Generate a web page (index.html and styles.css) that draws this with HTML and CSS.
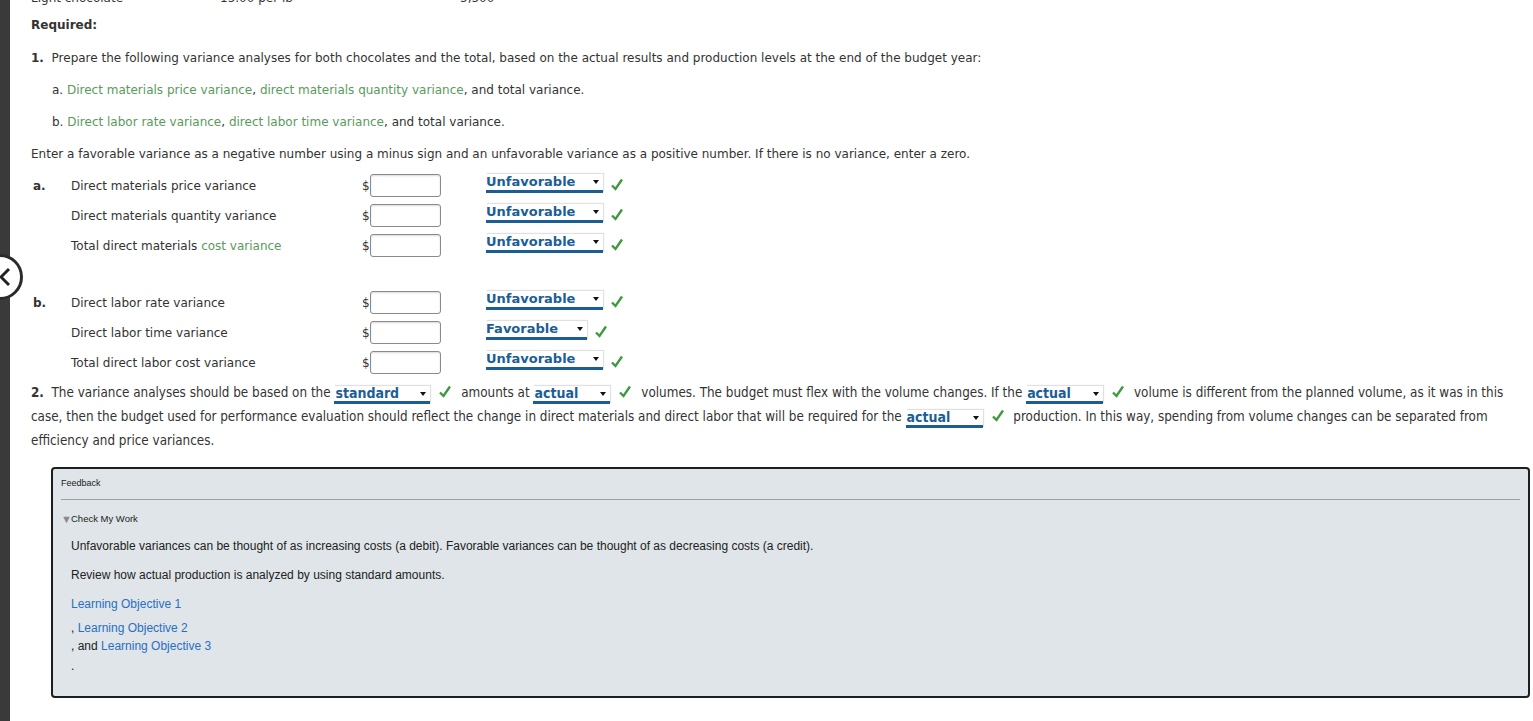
FILE: index.html
```html
<!DOCTYPE html>
<html>
<head>
<meta charset="utf-8">
<link rel="stylesheet" href="styles.css">
</head>
<body>
<div class="page">
  <div class="leftbar"></div>
  <button class="back-btn" aria-label="Back">
    <svg width="14" height="20" viewBox="0 0 14 20"><polyline points="11,2 3,10 11,18" fill="none" stroke="#222" stroke-width="3"/></svg>
  </button>
  <main class="content">
    <div class="top-line"><span class="tl1">Light chocolate</span><span class="tl2">15.00 per lb</span><span class="tl3">5,500</span></div>
    <div class="required">Required:</div>
    <div class="q1"><b>1.</b>&nbsp; Prepare the following variance analyses for both chocolates and the total, based on the actual results and production levels at the end of the budget year:</div>
    <div class="sub">a. <span class="term">Direct materials price variance</span>, <span class="term">direct materials quantity variance</span>, and total variance.</div>
    <div class="sub">b. <span class="term">Direct labor rate variance</span>, <span class="term">direct labor time variance</span>, and total variance.</div>
    <div class="enter">Enter a favorable variance as a negative number using a minus sign and an unfavorable variance as a positive number. If there is no variance, enter a zero.</div>

    <div class="vtable">
      <div class="vrow">
        <span class="letter">a.</span>
        <span class="vlabel">Direct materials price variance</span>
        <span class="dollar">$</span><span class="inp"></span>
        <span class="sel w-unf">Unfavorable<i class="arr"></i></span>
        <svg class="chk" viewBox="0 0 12 13"><path d="M1 7.5 L4.5 11 L11 1.5" fill="none" stroke="#3d9b3d" stroke-width="2.4"/></svg>
      </div>
      <div class="vrow">
        <span class="letter"></span>
        <span class="vlabel">Direct materials quantity variance</span>
        <span class="dollar">$</span><span class="inp"></span>
        <span class="sel w-unf">Unfavorable<i class="arr"></i></span>
        <svg class="chk" viewBox="0 0 12 13"><path d="M1 7.5 L4.5 11 L11 1.5" fill="none" stroke="#3d9b3d" stroke-width="2.4"/></svg>
      </div>
      <div class="vrow">
        <span class="letter"></span>
        <span class="vlabel">Total direct materials <span class="term">cost variance</span></span>
        <span class="dollar">$</span><span class="inp"></span>
        <span class="sel w-unf">Unfavorable<i class="arr"></i></span>
        <svg class="chk" viewBox="0 0 12 13"><path d="M1 7.5 L4.5 11 L11 1.5" fill="none" stroke="#3d9b3d" stroke-width="2.4"/></svg>
      </div>
    </div>

    <div class="vtable b">
      <div class="vrow">
        <span class="letter">b.</span>
        <span class="vlabel">Direct labor rate variance</span>
        <span class="dollar">$</span><span class="inp"></span>
        <span class="sel w-unf">Unfavorable<i class="arr"></i></span>
        <svg class="chk" viewBox="0 0 12 13"><path d="M1 7.5 L4.5 11 L11 1.5" fill="none" stroke="#3d9b3d" stroke-width="2.4"/></svg>
      </div>
      <div class="vrow">
        <span class="letter"></span>
        <span class="vlabel">Direct labor time variance</span>
        <span class="dollar">$</span><span class="inp"></span>
        <span class="sel w-fav">Favorable<i class="arr"></i></span>
        <svg class="chk" viewBox="0 0 12 13"><path d="M1 7.5 L4.5 11 L11 1.5" fill="none" stroke="#3d9b3d" stroke-width="2.4"/></svg>
      </div>
      <div class="vrow">
        <span class="letter"></span>
        <span class="vlabel">Total direct labor cost variance</span>
        <span class="dollar">$</span><span class="inp"></span>
        <span class="sel w-unf">Unfavorable<i class="arr"></i></span>
        <svg class="chk" viewBox="0 0 12 13"><path d="M1 7.5 L4.5 11 L11 1.5" fill="none" stroke="#3d9b3d" stroke-width="2.4"/></svg>
      </div>
    </div>

    <div class="q2"><b>2.</b>&nbsp; The variance analyses should be based on the <span class="isel w-std">standard<i class="arr"></i></span><svg class="ichk" viewBox="0 0 12 13"><path d="M1 7.5 L4.5 11 L11 1.5" fill="none" stroke="#3d9b3d" stroke-width="2.4"/></svg> amounts at <span class="isel w-act">actual<i class="arr"></i></span><svg class="ichk" viewBox="0 0 12 13"><path d="M1 7.5 L4.5 11 L11 1.5" fill="none" stroke="#3d9b3d" stroke-width="2.4"/></svg> volumes. The budget must flex with the volume changes. If the <span class="isel w-act">actual<i class="arr"></i></span><svg class="ichk" viewBox="0 0 12 13"><path d="M1 7.5 L4.5 11 L11 1.5" fill="none" stroke="#3d9b3d" stroke-width="2.4"/></svg> volume is different from the planned volume, as it was in this case, then the budget used for performance evaluation should reflect the change in direct materials and direct labor that will be required for the <span class="isel w-act">actual<i class="arr"></i></span><svg class="ichk" viewBox="0 0 12 13"><path d="M1 7.5 L4.5 11 L11 1.5" fill="none" stroke="#3d9b3d" stroke-width="2.4"/></svg> production. In this way, spending from volume changes can be separated from efficiency and price variances.</div>

    <section class="feedback">
      <div class="fb-title">Feedback</div>
      <div class="fb-rule"></div>
      <div class="fb-check"><span class="tri">&#9660;</span>Check My Work</div>
      <div class="fb-body">
        <p class="fb-p">Unfavorable variances can be thought of as increasing costs (a debit). Favorable variances can be thought of as decreasing costs (a credit).</p>
        <p class="fb-p">Review how actual production is analyzed by using standard amounts.</p>
        <p class="fb-link"><a href="#">Learning Objective 1</a></p>
        <div class="fb-line">, <a href="#">Learning Objective 2</a></div>
        <div class="fb-line">, and <a href="#">Learning Objective 3</a></div>
        <div class="fb-dot">.</div>
      </div>
    </section>
  </main>
</div>
</body>
</html>
```

FILE: styles.css
```css
html, body {
  margin: 0;
  padding: 0;
  background: #fff;
  overflow: hidden;
}
body {
  font-family: "DejaVu Sans", Verdana, sans-serif;
  font-size: 12px;
  color: #333;
}
.page {
  display: flex;
  min-height: 721px;
  position: relative;
}
.leftbar {
  width: 10px;
  background: #3a3a3a;
  flex: none;
}
.back-btn {
  position: absolute;
  left: -23px;
  top: 254px;
  width: 46px;
  height: 46px;
  border-radius: 50%;
  border: 3px solid #2b2b2b;
  background: #fff;
  padding: 0 0 0 18px;
  display: flex;
  align-items: center;
  justify-content: flex-start;
}
.content {
  flex: 1;
  padding-left: 21px;
  display: flex;
  flex-direction: column;
}
.top-line {
  line-height: 20px;
  margin-top: -12px;
  display: flex;
}
.tl1 { width: 189px; }
.tl2 { width: 240px; }
.required {
  margin-top: 7px;
  line-height: 20px;
  font-weight: bold;
}
.q1 {
  margin-top: 13px;
  line-height: 20px;
}
.sub {
  margin-top: 12px;
  line-height: 20px;
  padding-left: 21px;
}
.enter {
  margin-top: 12px;
  line-height: 20px;
}
.term { color: #5a9a5c; }

.vtable {
  margin-top: 7px;
  display: flex;
  flex-direction: column;
}
.vtable.b { margin-top: 27px; }
.vrow {
  height: 30px;
  display: flex;
  align-items: center;
}
.letter {
  width: 40px;
  font-weight: bold;
  padding-left: 2px;
  box-sizing: border-box;
}
.vlabel { width: 291px; }
.dollar { width: 8px; }
.inp {
  width: 71px;
  height: 23px;
  box-sizing: border-box;
  border: 1px solid #8a8a8a;
  border-radius: 3px;
  box-shadow: inset 0 1px 2px rgba(0,0,0,0.15);
  background: #fff;
  margin-top: -2px;
}
.sel {
  margin-left: 45px;
  height: 19px;
  box-sizing: border-box;
  display: inline-flex;
  align-items: center;
  position: relative;
  font-weight: bold;
  font-size: 13px;
  color: #1b5e96;
  background: #fff;
  border-bottom: 3px solid #1b5e96;
  box-shadow: 1px -1px 1px rgba(0,0,0,0.12);
  margin-top: -6px;
  line-height: 16px;
}
.w-unf { width: 117px; }
.w-fav { width: 101px; }
.arr {
  position: absolute;
  right: 4px;
  top: 6px;
  width: 0;
  height: 0;
  border-left: 3.5px solid transparent;
  border-right: 3.5px solid transparent;
  border-top: 4px solid #111;
}
.chk {
  width: 12px;
  height: 13px;
  margin-left: 8px;
  margin-top: -4px;
}

.q2 {
  margin-top: 3px;
  line-height: 24px;
  font-stretch: condensed;
  font-family: "DejaVu Sans Condensed", "DejaVu Sans", sans-serif;
  font-size: 13.35px;
  padding-right: 15px;
}
.isel {
  display: inline-block;
  position: relative;
  height: 18px;
  line-height: 15px;
  box-sizing: border-box;
  vertical-align: -1px;
  font-weight: bold;
  font-size: 14px;
  color: #1b5e96;
  background: #fff;
  border-bottom: 3px solid #1b5e96;
  box-shadow: 1px -1px 1px rgba(0,0,0,0.12);
  padding-left: 1px;
}
.w-std { width: 96px; }
.w-act { width: 77px; }
.ichk {
  width: 12px;
  height: 13px;
  margin: 0 6px 0 9px;
  vertical-align: -1px;
}

.feedback {
  margin: 14px 3px 0 20px;
  height: 231px;
  box-sizing: border-box;
  border: 2px solid #1e1e1e;
  border-radius: 4px;
  background: #dfe5e9;
  padding: 0 8px;
  font-family: "Liberation Sans", Arial, sans-serif;
  color: #222;
}
.fb-title {
  font-size: 9px;
  line-height: 14px;
  margin-top: 7px;
}
.fb-rule {
  height: 1px;
  background: #9aa0a3;
  margin-top: 9px;
}
.fb-check {
  font-size: 9.5px;
  line-height: 14px;
  margin-top: 12px;
  display: flex;
  align-items: center;
}
.tri {
  font-size: 11px;
  color: #8a8a8a;
  width: 10px;
  line-height: 14px;
}
.fb-body {
  padding-left: 10px;
  font-size: 12px;
}
.fb-p {
  margin: 11px 0 0 0;
  line-height: 18px;
}
.fb-link {
  margin: 11px 0 0 0;
  line-height: 18px;
}
.fb-line { line-height: 18px; margin-top: 6px; }
.fb-line + .fb-line { margin-top: 0; }
.fb-dot { line-height: 18px; margin-top: 2px; }
a { color: #2a6fc0; text-decoration: none; }
```
